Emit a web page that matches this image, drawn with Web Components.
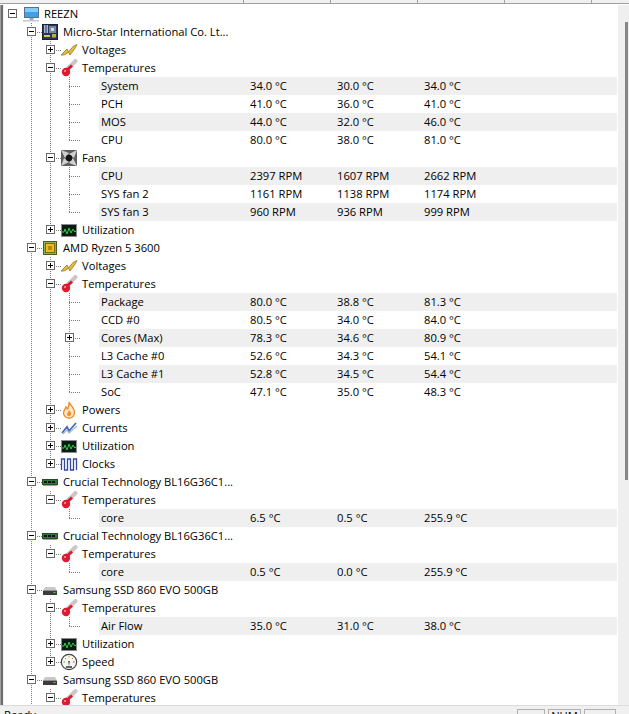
<!DOCTYPE html>
<html>
<head>
<meta charset="utf-8">
<style>
html, body { margin: 0; padding: 0; height: 100%; overflow: hidden; background: #f0f0f0; }
</style>
</head>
<body>
<hw-monitor></hw-monitor>
<script>
// icon drawings, each one sits in an 18px box (the computer one is wider)
const ICONS = {
    pc: `<svg width="24" height="18" viewBox="0 0 24 18"><rect x="2.5" y="2.5" width="14" height="10" fill="#3fa0ea" stroke="#5a7088"/><rect x="3" y="3" width="13" height="4" fill="#84ccf8"/><rect x="7.5" y="13" width="4" height="2" fill="#a0aab4"/><rect x="1" y="15" width="16" height="1.5" fill="#c0cad4"/></svg>`,
    board: `<svg width="18" height="18" viewBox="0 0 18 18"><rect x="1.5" y="1.5" width="15" height="15" fill="#26375a" stroke="#1a2236"/><rect x="3" y="2" width="1.5" height="8" fill="#a4b8dc"/><rect x="5.5" y="2" width="1.5" height="8" fill="#a4b8dc"/><rect x="8" y="3" width="7" height="7" fill="#79869e"/><rect x="10" y="5" width="3" height="3" fill="#d4dae6"/><rect x="3" y="12" width="6" height="2" fill="#dcc64c"/><rect x="11" y="11" width="4" height="3.5" fill="#c8a93c"/></svg>`,
    volt: `<svg width="18" height="18" viewBox="0 0 18 18"><path d="M1 14 L7 8 L8.5 11 L13 5.5 L17 3.5 L14.5 8 L10 14 L8.5 11.5 L4 14 Z" fill="#ecbc30" stroke="#7c6a2a" stroke-width=".7"/></svg>`,
    temp: `<svg width="18" height="18" viewBox="0 0 18 18"><path d="M15.5 2 L7 10.5" stroke="#cdc6c6" stroke-width="4" stroke-linecap="round"/><path d="M12 6.5 L6 12" stroke="#e01830" stroke-width="3"/><circle cx="6" cy="13" r="4.2" fill="#e01830"/><circle cx="5" cy="12" r="1.1" fill="#ff9aa0"/></svg>`,
    fan: `<svg width="18" height="18" viewBox="0 0 18 18"><rect x="1" y="1" width="16" height="16" fill="#5e5e5e"/><g style="filter:blur(.6px)"><path d="M1 1 L9 4 L5 9 Z M17 1 L14 9 L9 5 Z M17 17 L9 14 L13 9 Z M1 17 L4 9 L9 13 Z" fill="#d0d0d0"/><circle cx="9" cy="9" r="3.2" fill="#141414"/></g></svg>`,
    util: `<svg width="18" height="18" viewBox="0 0 18 18"><rect x="1.5" y="3.5" width="15" height="12" fill="#0c1c14" stroke="#8c8c8c"/><path d="M2 11 L4 11 L5 8 L7 13 L9 7 L11 12 L13 8 L15 11 L16 10" fill="none" stroke="#2ed03e" stroke-width="1"/></svg>`,
    cpu: `<svg width="18" height="18" viewBox="0 0 18 18"><rect x="2.5" y="2.5" width="13" height="13" fill="#8db050" stroke="#4c5c22"/><rect x="4.5" y="4.5" width="9" height="9" fill="#ecbc20" stroke="#7a6a10"/><rect x="7" y="7" width="4" height="4" fill="#b8860b"/></svg>`,
    power: `<svg width="18" height="18" viewBox="0 0 18 18"><path d="M9 1 C10 4 15 7 14.5 12 C14 15.5 11.5 17 9 17 C6 17 3.5 15 3.5 12 C3.5 9.5 5 8.5 6 6 C7 7 7.5 8 7.5 8.5 C8.5 6 9.5 4 9 1 Z" fill="#fbe6c8" stroke="#ee8a1c" stroke-width="1.3"/><path d="M9 9 C10.5 11 11.5 12 11 14 C10 15.5 7.5 15.5 7 14 C6.5 12.5 8.5 11 9 9 Z" fill="#f09030"/></svg>`,
    curr: `<svg width="18" height="18" viewBox="0 0 18 18"><path d="M2 14 L7 8 L9 12 L16 4" fill="none" stroke="#4468b8" stroke-width="1.8"/><path d="M3 15 L7 11 L9 14 L17 7" fill="none" stroke="#a8b8d8" stroke-width="1.2"/></svg>`,
    clock: `<svg width="18" height="18" viewBox="0 0 18 18"><path d="M1.5 15 L1.5 4 L4.5 4 L4.5 15 L7.5 15 L7.5 4 L10.5 4 L10.5 15 L13.5 15 L13.5 4 L16.5 4 L16.5 15" fill="none" stroke="#34489c" stroke-width="1.3"/></svg>`,
    ram: `<svg width="18" height="18" viewBox="0 0 18 18"><rect x="1.5" y="6.5" width="15" height="5" fill="#2f7a3c" stroke="#1e5028"/><rect x="3" y="8" width="3" height="2" fill="#111"/><rect x="7" y="8" width="3" height="2" fill="#111"/><rect x="11" y="8" width="3" height="2" fill="#111"/><path d="M2 12.5 H16" stroke="#b8a840"/></svg>`,
    ssd: `<svg width="18" height="18" viewBox="0 0 18 18"><path d="M4 6 H14 L16 9.5 H2 Z" fill="#c8c8c8"/><rect x="2" y="9.5" width="14" height="4.5" rx=".5" fill="#3c3c3c"/><rect x="12.5" y="11" width="2" height="1" fill="#40e040"/></svg>`,
    speed: `<svg width="18" height="18" viewBox="0 0 18 18"><circle cx="9" cy="9" r="7.7" fill="#f6f6f2" stroke="#444" stroke-width="1.2"/><path d="M3.5 9 L5 9" stroke="#40a040"/><path d="M5 5 L6 6" stroke="#70b040"/><path d="M9 3 L9 4.5" stroke="#e0b020"/><path d="M13 5 L12 6" stroke="#e07020"/><path d="M14.5 9 L13 9" stroke="#d02020"/><path d="M9 13 L8.2 8 L9.8 8 Z" fill="#333"/><rect x="6" y="13" width="6" height="2" fill="#666"/></svg>`
};

// [level, open state, icon, label, v1, v2, v3, striped]
const ROWS = [
    [0, '-', 'pc', 'REEZN'],
    [1, '-', 'board', 'Micro-Star International Co. Lt...'],
    [2, '+', 'volt', 'Voltages'],
    [2, '-', 'temp', 'Temperatures'],
    [3, '', '', 'System', '34.0 °C', '30.0 °C', '34.0 °C', 1],
    [3, '', '', 'PCH', '41.0 °C', '36.0 °C', '41.0 °C'],
    [3, '', '', 'MOS', '44.0 °C', '32.0 °C', '46.0 °C', 1],
    [3, '', '', 'CPU', '80.0 °C', '38.0 °C', '81.0 °C'],
    [2, '-', 'fan', 'Fans'],
    [3, '', '', 'CPU', '2397 RPM', '1607 RPM', '2662 RPM', 1],
    [3, '', '', 'SYS fan 2', '1161 RPM', '1138 RPM', '1174 RPM'],
    [3, '', '', 'SYS fan 3', '960 RPM', '936 RPM', '999 RPM', 1],
    [2, '+', 'util', 'Utilization'],
    [1, '-', 'cpu', 'AMD Ryzen 5 3600'],
    [2, '+', 'volt', 'Voltages'],
    [2, '-', 'temp', 'Temperatures'],
    [3, '', '', 'Package', '80.0 °C', '38.8 °C', '81.3 °C', 1],
    [3, '', '', 'CCD #0', '80.5 °C', '34.0 °C', '84.0 °C'],
    [3, '+', '', 'Cores (Max)', '78.3 °C', '34.6 °C', '80.9 °C', 1],
    [3, '', '', 'L3 Cache #0', '52.6 °C', '34.3 °C', '54.1 °C'],
    [3, '', '', 'L3 Cache #1', '52.8 °C', '34.5 °C', '54.4 °C', 1],
    [3, '', '', 'SoC', '47.1 °C', '35.0 °C', '48.3 °C'],
    [2, '+', 'power', 'Powers'],
    [2, '+', 'curr', 'Currents'],
    [2, '+', 'util', 'Utilization'],
    [2, '+', 'clock', 'Clocks'],
    [1, '-', 'ram', 'Crucial Technology BL16G36C1...'],
    [2, '-', 'temp', 'Temperatures'],
    [3, '', '', 'core', '6.5 °C', '0.5 °C', '255.9 °C', 1],
    [1, '-', 'ram', 'Crucial Technology BL16G36C1...'],
    [2, '-', 'temp', 'Temperatures'],
    [3, '', '', 'core', '0.5 °C', '0.0 °C', '255.9 °C', 1],
    [1, '-', 'ssd', 'Samsung SSD 860 EVO 500GB'],
    [2, '-', 'temp', 'Temperatures'],
    [3, '', '', 'Air Flow', '35.0 °C', '31.0 °C', '38.0 °C', 1],
    [2, '+', 'util', 'Utilization'],
    [2, '+', 'speed', 'Speed'],
    [1, '-', 'ssd', 'Samsung SSD 860 EVO 500GB'],
    [2, '-', 'temp', 'Temperatures']
];

// does the vertical guide of `level` carry on below row i
function hasNext(i, level) {
    for (let j = i + 1; j < ROWS.length; j++) {
        if (ROWS[j][0] < level) return false;
        if (ROWS[j][0] === level) return true;
    }
    return level <= 1;
}

class TreeRow extends HTMLElement {
    constructor() {
        super();
        this.attachShadow({ mode: 'open' });
    }

    connectedCallback() {
        const i = +this.getAttribute('index');
        const [level, state, icon, label, v1, v2, v3, striped] = ROWS[i];
        const x = 19 * level;
        let guides = '';
        for (let l = 1; l <= level; l++) {
            const next = hasNext(i, l);
            if (next || l === level) {
                guides += `<i class="v" style="left:${9 + 19 * l}px;height:${next ? 18 : 10}px"></i>`;
            }
        }
        if (level > 0) guides += `<i class="h" style="left:${9 + x}px"></i>`;
        const toggle = state ? `<b class="box" style="left:${x + 5}px">${state === '+' ? '<u class="vb"></u>' : ''}<u class="hb"></u></b>` : '';
        this.shadowRoot.innerHTML = `
            <style>
                :host { display: block; height: 18px; }
                .row { position: relative; height: 18px; display: flex; }
                .tree { position: relative; width: 247px; flex: none; }
                .v { position: absolute; top: 0; width: 1px;
                     background: repeating-linear-gradient(#7a7a7a 0 1px, transparent 1px 2px); }
                .h { position: absolute; top: 9px; width: 12px; height: 1px;
                     background: repeating-linear-gradient(90deg, #7a7a7a 0 1px, transparent 1px 2px); }
                .box { position: absolute; top: 4px; width: 9px; height: 9px; background: #fff;
                       border: 1px solid #6a6a6a; box-sizing: border-box; }
                .hb { position: absolute; left: 1px; top: 3px; width: 5px; height: 1px; background: #000; }
                .vb { position: absolute; left: 3px; top: 1px; width: 1px; height: 5px; background: #000; }
                .icon { position: absolute; top: 0; height: 18px; }
                svg { display: block; }
                .label { position: absolute; top: 0; line-height: 17px; white-space: nowrap; }
                .vals { position: relative; display: flex; flex: 1; }
                .vals span { width: 87px; line-height: 17px; white-space: nowrap; }
                .stripe { position: absolute; left: 96px; right: 1px; top: 0; bottom: 0; background: #efefef; }
            </style>
            <div class="row">
                ${striped ? '<div class="stripe"></div>' : ''}
                <div class="tree">
                    ${guides}${toggle}
                    ${icon ? `<div class="icon" style="left:${x + 19}px">${ICONS[icon]}</div>` : ''}
                    <span class="label" style="left:${x + 41}px">${label}</span>
                </div>
                <div class="vals">
                    <span>${v1 || ''}</span><span>${v2 || ''}</span><span>${v3 || ''}</span>
                </div>
            </div>`;
    }
}
customElements.define('tree-row', TreeRow);

class HwMonitor extends HTMLElement {
    constructor() {
        super();
        this.attachShadow({ mode: 'open' });
    }

    connectedCallback() {
        const rows = ROWS.map((r, i) => `<tree-row index="${i}"></tree-row>`).join('');
        this.shadowRoot.innerHTML = `
            <style>
                :host { display: flex; flex-direction: column; width: 629px; height: 714px;
                        font: 11.2px "Open Sans", "Noto Sans", sans-serif; color: #000; }
                .head { display: flex; height: 5px; flex: none; background: #fff; }
                .head i { height: 4px; width: 87px; border-right: 1px solid #a0a0a0; border-bottom: 1px solid #a0a0a0;
                          box-sizing: border-box; background: #f0f0f0; flex: none; }
                .head i:first-child { width: 244px; }
                .head i:last-child { flex: 1; border-right: 0; }
                .main { flex: 1; display: flex; min-height: 0; }
                .edge { width: 3px; flex: none; background: linear-gradient(90deg, #a0a0a0 0 1px, #6d6d6d 1px); }
                .tree { flex: 1; background: #fff; box-shadow: inset 1px 0 #f0f0f0; overflow: hidden; min-width: 0; }
                .scroll { width: 11px; flex: none; background: #efefef; display: flex; justify-content: flex-end;
                          padding: 17px 1px 0 0; box-sizing: border-box; }
                .thumb { width: 3px; height: 458px; background: #868686; }
                .status { flex: none; height: 9px; background: #f0f0f0; border-top: 1px solid #dcdcdc;
                          box-sizing: border-box; display: flex; gap: 3px; padding: 3px 13px 0 4px; overflow: hidden; }
                .txt { flex: 1; line-height: 12px; }
                .p { flex: none; width: 28px; height: 20px; border: 1px solid #b0b0b0; box-sizing: border-box;
                     text-align: center; line-height: 12px; }
                .p.n { width: 33px; }
                .p.o { width: 32px; }
            </style>
            <div class="head"><i></i><i></i><i></i><i></i><i></i><i></i></div>
            <div class="main">
                <div class="edge"></div>
                <div class="tree">${rows}</div>
                <div class="scroll"><div class="thumb"></div></div>
            </div>
            <div class="status">
                <span class="txt">Ready</span>
                <span class="p"></span><span class="p n">NUM</span><span class="p o"></span>
            </div>`;
    }
}
customElements.define('hw-monitor', HwMonitor);
</script>
</body>
</html>
